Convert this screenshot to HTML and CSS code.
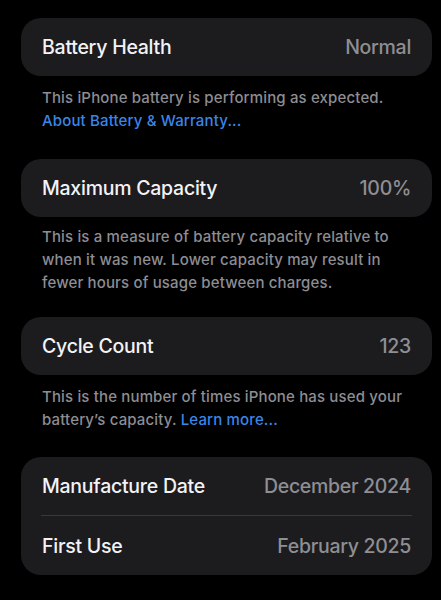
FILE: index.html
```html
<!DOCTYPE html>
<html lang="en">
<head>
<meta charset="utf-8">
<link rel="stylesheet" href="styles.css">
</head>
<body>
<main class="page">
  <section class="card">
    <div class="row"><span class="label">Battery Health</span><span class="value">Normal</span></div>
  </section>
  <p class="footer">This iPhone battery is performing as expected.<br><a class="link">About Battery &amp; Warranty...</a></p>

  <section class="card">
    <div class="row"><span class="label">Maximum Capacity</span><span class="value">100%</span></div>
  </section>
  <p class="footer footer--long">This is a measure of battery capacity relative to when it was new. Lower capacity may result in fewer hours of usage between charges.</p>

  <section class="card">
    <div class="row"><span class="label">Cycle Count</span><span class="value">123</span></div>
  </section>
  <p class="footer footer--last">This is the number of times iPhone has used your battery’s capacity. <a class="link">Learn more...</a></p>

  <section class="card">
    <div class="row"><span class="label">Manufacture Date</span><span class="value">December 2024</span></div>
    <div class="divider"></div>
    <div class="row row--tall"><span class="label">First Use</span><span class="value">February 2025</span></div>
  </section>
</main>
</body>
</html>
```
FILE: styles.css
```css
html, body {
  margin: 0;
  padding: 0;
  background: #000;
}
body {
  font-family: Inter, "Noto Sans", sans-serif;
  -webkit-font-smoothing: antialiased;
}
.page {
  padding: 18px 9px 0 21px;
  width: 411px;
}
.card {
  background: #1c1c1e;
  border-radius: 20px;
  display: flex;
  flex-direction: column;
}
.row {
  height: 58px;
  display: flex;
  align-items: center;
  justify-content: space-between;
  padding: 0 21px 0 21px;
}
.row--tall {
  height: 59px;
}
.label {
  color: #f2f2f7;
  font-size: 19.5px;
  font-weight: 500;
  letter-spacing: -0.25px;
}
.value {
  color: #8e8e93;
  font-size: 19.5px;
  font-weight: 500;
  letter-spacing: -0.3px;
}
.divider {
  height: 1px;
  background: #38383a;
  margin: 0 20px;
}
.footer {
  margin: 0;
  padding: 10px 21px 27px 21px;
  color: #8d8d93;
  font-size: 15px;
  font-weight: 500;
  line-height: 23px;
  letter-spacing: 0.15px;
}
.footer--long {
  padding-top: 8px;
  padding-bottom: 23px;
}
.footer--last {
  padding-bottom: 26px;
}
.link {
  color: #3a86e8;
}
```
